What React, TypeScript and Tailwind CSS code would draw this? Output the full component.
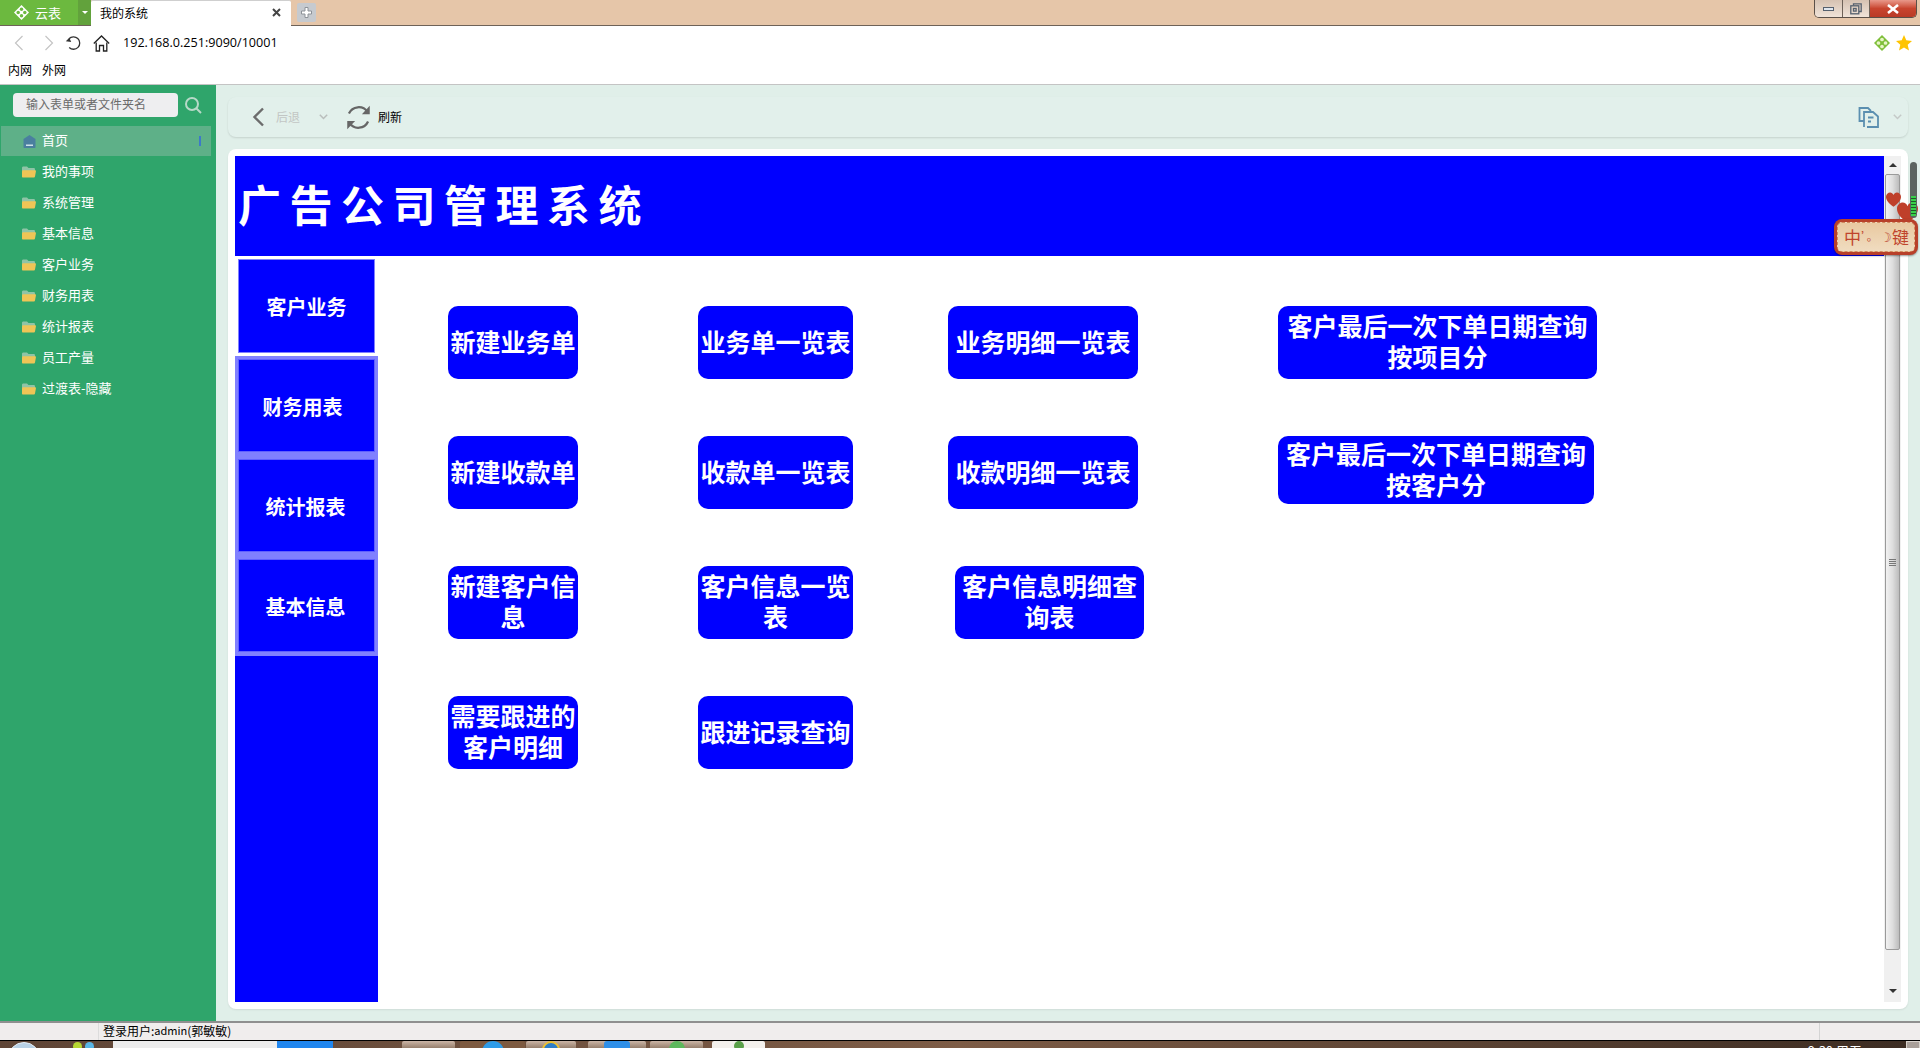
import React from 'react';

const FONT = "font-['Noto_Sans_CJK_SC',sans-serif]";

const menuItems = ['我的事项', '系统管理', '基本信息', '客户业务', '财务用表', '统计报表', '员工产量', '过渡表-隐藏'];

const sideTabs = [
    { label: '财务用表', cls: 'pr-2' },
    { label: '统计报表', cls: 'pr-0.5' },
    { label: '基本信息', cls: 'pr-0.5' },
];

// 按钮都是设计器里摆的，位置不太整齐
const buttons = [
    { lines: ['新建业务单'], col: 'col-start-1', cls: 'w-[130px] h-[73px]' },
    { lines: ['业务单一览表'], col: 'col-start-2', cls: 'w-[155px] h-[73px]' },
    { lines: ['业务明细一览表'], col: 'col-start-3', cls: 'w-[190px] h-[73px]' },
    { lines: ['客户最后一次下单日期查询', '按项目分'], col: 'col-start-4', cls: 'w-[319px] h-[73px]' },
    { lines: ['新建收款单'], col: 'col-start-1', cls: 'w-[130px] h-[73px]' },
    { lines: ['收款单一览表'], col: 'col-start-2', cls: 'w-[155px] h-[73px]' },
    { lines: ['收款明细一览表'], col: 'col-start-3', cls: 'w-[190px] h-[73px]' },
    { lines: ['客户最后一次下单日期查询', '按客户分'], col: 'col-start-4', cls: 'w-[316px] h-[68px]' },
    { lines: ['新建客户信', '息'], col: 'col-start-1', cls: 'w-[130px] h-[73px]' },
    { lines: ['客户信息一览', '表'], col: 'col-start-2', cls: 'w-[155px] h-[73px]' },
    { lines: ['客户信息明细查', '询表'], col: 'col-start-3', cls: 'w-[189px] h-[73px] ml-[7px]' },
    { lines: ['需要跟进的', '客户明细'], col: 'col-start-1', cls: 'w-[130px] h-[73px]' },
    { lines: ['跟进记录查询'], col: 'col-start-2', cls: 'w-[155px] h-[73px]' },
];

const Clover: React.FC<{ size: number; bg: string; hole: string }> = ({ size, bg, hole }) => (
    <svg width={size} height={size} viewBox="0 0 20 20">
        <path d="M10 0 20 10 10 20 0 10Z" fill={bg} />
        <circle cx="10" cy="5.6" r="2.3" fill={hole} />
        <circle cx="10" cy="14.4" r="2.3" fill={hole} />
        <circle cx="5.6" cy="10" r="2.3" fill={hole} />
        <circle cx="14.4" cy="10" r="2.3" fill={hole} />
    </svg>
);

const Folder = () => (
    <svg width="14" height="12" viewBox="0 0 14 12">
        <path d="M0 2C0 1 .6.5 1.400.5H5L6.500 2H11.500C12.400 2 13 2.500 13 3.400V5H0Z" fill="#8fc4a6" />
        <path d="M1.500 4.300H13C13.800 4.300 14 4.800 13.900 5.400L13 10.600C12.900 11.200 12.500 11.500 12 11.500H1C.4 11.500 0 11.100 0 10.500V5.500C0 4.800.7 4.300 1.500 4.300Z" fill="#efc556" />
    </svg>
);

const Heart: React.FC<{ className: string; size: number }> = ({ className, size }) => (
    <svg className={className} width={size} height={size} viewBox="0 0 14 14">
        <path d="M7 13.800C2.500 10.500 0 7.800 0 4.500 0 2 2 .4 3.800 .4 5.300 .4 6.400 1.300 7 2.800 7.600 1.300 8.700 .4 10.200 .4 12 .4 14 2 14 4.500 14 7.800 11.500 10.500 7 13.800Z" fill="#bf3f2a" />
    </svg>
);

const TitleBar = () => (
    <div className="h-[26px] flex bg-[#e6c6a9] border-b border-[#6e6258] relative shrink-0">
        <div className="w-[78px] h-[25px] bg-[#6cb93f] flex items-center pl-[14px] gap-[6px] text-white text-[13px]">
            <Clover size={15} bg="#ffffff" hole="#6cb93f" />
            <span>云表</span>
        </div>
        <div className="w-[13px] h-[25px] bg-[#62a23c] flex items-center justify-center">
            <div className="border-x-[3px] border-x-transparent border-t-[3px] border-t-white" />
        </div>
        <div className="w-[200px] h-[26px] bg-white rounded-t-[2px] border-t border-[#cfcfcf] flex items-center pl-[9px] pr-[10px] pb-[2px] justify-between text-[12px] text-black">
            <span>我的系统</span>
            <svg width="9" height="9" viewBox="0 0 9 9" fill="none" stroke="#444" strokeWidth="2">
                <path d="M1 1 8 8M8 1 1 8" />
            </svg>
        </div>
        <div className="w-[19px] h-[19px] mt-[3px] ml-[6px] bg-[#c6cacf] rounded-[2px] flex items-center justify-center">
            <svg width="11" height="11" viewBox="0 0 11 11">
                <path d="M4 .5H7V4H10.500V7H7V10.500H4V7H.5V4H4Z" fill="#fff" stroke="#8d9298" strokeWidth="1" />
            </svg>
        </div>
        <div className="ml-auto mr-[3px] w-[103px] h-[18px] flex rounded-b-[5px] border border-t-0 border-[#5b5048] overflow-hidden">
            <div className="w-[28px] bg-gradient-to-b from-[#d6c2b2] to-[#f0e3d8] border-r border-[#6e6258] flex items-center justify-center">
                <div className="w-[11px] h-[4px] bg-[#dfe6ee] border border-[#55606e]" />
            </div>
            <div className="w-[27px] bg-gradient-to-b from-[#d6c2b2] to-[#f0e3d8] border-r border-[#6e6258] flex items-center justify-center">
                <svg width="12" height="12" viewBox="0 0 12 12" fill="none" stroke="#55606e" strokeWidth="1.300">
                    <path d="M3.500 2.500V.8H11.200V8.500H9" />
                    <rect x=".8" y="2.800" width="8" height="8" />
                    <rect x="3.500" y="5.500" width="2.600" height="2.600" />
                </svg>
            </div>
            <div className="flex-1 bg-gradient-to-b from-[#e8988a] via-[#c8442e] to-[#b93a26] flex items-center justify-center">
                <svg width="14" height="10" viewBox="0 0 14 10" fill="none" stroke="#fff" strokeWidth="2.600">
                    <path d="M2 1 12 9M12 1 2 9" />
                </svg>
            </div>
        </div>
    </div>
);

const AddressBar = () => (
    <div className="h-[34px] bg-white flex items-center shrink-0 relative">
        <svg className="ml-[14px]" width="10" height="16" viewBox="0 0 10 16" fill="none" stroke="#c4c4c4" strokeWidth="1.200">
            <path d="M8.500 1 1.500 8 8.500 15" />
        </svg>
        <svg className="ml-[20px]" width="10" height="16" viewBox="0 0 10 16" fill="none" stroke="#c4c4c4" strokeWidth="1.200">
            <path d="M1.500 1 8.500 8 1.500 15" />
        </svg>
        <svg className="ml-[11px]" width="17" height="16" viewBox="0 0 17 16" fill="none" stroke="#333" strokeWidth="1.300">
            <path d="M4 3.800A6.200 6.200 0 1 1 4.200 12.500" />
            <path d="M.8 6.200 4.300 2.800 6.200 7Z" fill="#333" stroke="none" />
        </svg>
        <svg className="ml-[11px]" width="17" height="17" viewBox="0 0 17 17" fill="none" stroke="#222" strokeWidth="1.300">
            <path d="M.8 8.500 8.500 1 16.200 8.500" />
            <path d="M3.200 7.500V16H6.500V10.500H10.500V16H13.800V7.500" />
        </svg>
        <span className="ml-[13px] text-[12.600px] text-black font-['Open_Sans',sans-serif]">192.168.0.251:9090/10001</span>
        <div className="ml-auto mr-[8px] flex items-center gap-[6px]">
            <Clover size={16} bg="#7fbf3a" hole="#e8f5c8" />
            <svg width="16" height="16" viewBox="0 0 16 16">
                <path d="M8 0 10.300 5.300 16 5.900 11.700 9.700 13 15.500 8 12.500 3 15.500 4.300 9.700 0 5.900 5.700 5.300Z" fill="#ffc400" />
            </svg>
        </div>
    </div>
);

const Sidebar = () => (
    <div className="w-[216px] shrink-0 bg-[#2fa56b] text-white text-[13px]">
        <div className="pt-2 pl-[13px] flex items-center">
            <div className="w-[165px] h-6 bg-[#eeeef0] rounded-[4px] pl-[13px] pb-[2px] flex items-center text-[#6b6b6b] text-[12px]">
                输入表单或者文件夹名
            </div>
            <svg className="ml-[6px]" width="18" height="18" viewBox="0 0 18 18" fill="none" stroke="#b7d9c8" strokeWidth="2">
                <circle cx="8" cy="8" r="6" />
                <path d="M12.500 12.500 17 17" />
            </svg>
        </div>
        <div className="mt-[9px] ml-px w-[210px] h-[30px] bg-[#5eb088] flex items-center pl-[22px] relative">
            <svg width="13" height="13" viewBox="0 0 13 13">
                <path d="M6.500 0 12.500 4V12C12.500 12.600 12 13 11.500 13H1.500C1 13 .5 12.600 .5 12V4Z" fill="#4a7f9f" />
                <rect x="3" y="9.500" width="7" height="1.500" fill="#cfe3ea" />
            </svg>
            <span className="ml-[6px] pb-[2px]">首页</span>
            <div className="absolute right-[10px] top-[10px] w-[2px] h-[10px] bg-[#3d79c9]" />
        </div>
        {menuItems.map(item => (
            <div key={item} className="h-[31px] flex items-center pl-[22px] first:mt-[1px]">
                <Folder />
                <span className="ml-[6px] pb-[2px]">{item}</span>
            </div>
        ))}
    </div>
);

const Toolbar = () => (
    <div className="h-10 bg-[#e2f0eb] rounded-lg shadow-[0_1px_2px_rgba(0,0,0,0.12)] flex items-center text-[12px]">
        <svg className="ml-[24px]" width="13" height="20" viewBox="0 0 13 20" fill="none" stroke="#6c6c6c" strokeWidth="2.400">
            <path d="M11 1.500 2.500 10 11 18.500" />
        </svg>
        <span className="ml-[11px] text-[#c2c6c4]">后退</span>
        <svg className="ml-[19px]" width="9" height="6" viewBox="0 0 9 6" fill="none" stroke="#b9bebc" strokeWidth="1.500">
            <path d="M.8.8 4.500 4.500 8.200.8" />
        </svg>
        <svg className="ml-[17px]" width="27" height="27" viewBox="0 0 24 24" fill="none" stroke="#666" strokeWidth="2">
            <path d="M3.500 8.500A9.500 9.500 0 0 1 20 7" />
            <path d="M20.500 15.500A9.500 9.500 0 0 1 4 17" />
            <path d="M22 1.500V9H15Z" fill="#666" stroke="none" />
            <path d="M2 22.500V15H9Z" fill="#666" stroke="none" />
        </svg>
        <span className="ml-[6px] text-black">刷新</span>
        <svg className="ml-auto" width="21" height="21" viewBox="0 0 21 21" fill="none" stroke="#5b8fb0" strokeWidth="1.800">
            <path d="M6 14H1.500V1H10L13 4" />
            <path d="M6 20V5H15L20 9.500V20H9" />
            <path d="M10 10.500H15.500M10 14.500H13" />
        </svg>
        <svg className="ml-[14px] mr-[6px]" width="9" height="6" viewBox="0 0 9 6" fill="none" stroke="#c4c9c7" strokeWidth="1.500">
            <path d="M.8.8 4.500 4.500 8.200.8" />
        </svg>
    </div>
);

const ScrollBar = () => (
    <div className="w-[17px] shrink-0 bg-[#f0f0f0] flex flex-col items-center relative">
        <div className="h-[18px] flex items-center justify-center">
            <div className="border-x-[4px] border-x-transparent border-b-[4px] border-b-[#333]" />
        </div>
        <div className="w-[15px] h-[776px] rounded-[2px] border border-[#9a9a9a] bg-gradient-to-r from-[#f2f2f2] via-[#dedede] to-[#bcbcbc] flex flex-col items-center justify-center gap-px">
            <div className="w-[7px] h-px bg-[#777]" />
            <div className="w-[7px] h-px bg-[#777]" />
            <div className="w-[7px] h-px bg-[#777]" />
            <div className="w-[7px] h-px bg-[#777]" />
        </div>
        <div className="mt-auto h-[22px] flex items-center justify-center">
            <div className="border-x-[4px] border-x-transparent border-t-[4px] border-t-[#333]" />
        </div>
    </div>
);

const Card = () => (
    <div className="mt-3 h-[860px] bg-white rounded-lg p-[7px] flex shadow-[0_1px_2px_rgba(0,0,0,0.08)]">
        <div className="flex-1 flex flex-col min-w-0">
            <div className="h-[100px] bg-[#0000ff] shrink-0 flex items-center pl-[3px] pb-[6px]">
                <h1 className="text-[43px] leading-none font-bold text-white tracking-[8.500px]">广告公司管理系统</h1>
            </div>
            <div className="flex-1 flex min-h-0">
                <div className="w-[143px] bg-[#0000ff] shrink-0 text-[20px] font-bold text-white">
                    <div className="h-[100px] bg-white p-[3px]">
                        <div className="h-[94px] bg-[#0000ff] border border-[#8080ff] pt-[2px] flex items-center justify-center">客户业务</div>
                    </div>
                    {sideTabs.map(tab => (
                        <div key={tab.label} className="h-[100px] bg-[#8080ff] p-[3px]">
                            <div className={`h-[93px] bg-[#0000ff] border border-[#6060ff] pt-[2px] flex items-center justify-center ${tab.cls}`}>{tab.label}</div>
                        </div>
                    ))}
                </div>
                <div className="flex-1 pt-[50px] pl-[70px] grid grid-cols-[250px_250px_330px_1fr] auto-rows-[130px] content-start">
                    {buttons.map(btn => (
                        <div
                            key={btn.lines[0]}
                            className={`${btn.col} ${btn.cls} bg-[#0000ff] rounded-[10px] pb-[3px] flex flex-col items-center justify-center text-white text-[25px] leading-[31px] font-bold whitespace-nowrap`}
                        >
                            {btn.lines.map(line => <span key={line}>{line}</span>)}
                        </div>
                    ))}
                </div>
            </div>
        </div>
        <ScrollBar />
    </div>
);

// 任务栏只露出顶上几个像素
const Taskbar = () => (
    <div className="h-2 flex-1 relative overflow-hidden bg-gradient-to-r from-[#5f4536] via-[#7d5c46] to-[#3c2c22] flex items-start">
        <div className="w-8 h-8 ml-2 mt-[1px] rounded-full bg-[#b9d2e6] border border-[#e6eef5] shrink-0" />
        <div className="w-[9px] h-[9px] ml-[33px] mt-[1px] rounded-full bg-[#b7d833] shrink-0" />
        <div className="w-[9px] h-[9px] ml-[3px] mt-[1px] rounded-full bg-[#59b6e6] shrink-0" />
        <div className="w-[164px] h-2 ml-[19px] bg-[#ececec] shrink-0" />
        <div className="w-[56px] h-2 bg-[#1f86ef] shrink-0" />
        <div className="w-[53px] h-2 ml-[69px] bg-gradient-to-b from-[#cbb5a6] to-[#8f7865] rounded-t-[2px] shrink-0" />
        <div className="w-[65px] h-2 ml-[5px] bg-[#7d5a40] rounded-t-[2px] flex justify-center shrink-0">
            <div className="w-[22px] h-[22px] rounded-full bg-[#2e9ce8]" />
        </div>
        <div className="w-[50px] h-2 ml-px bg-gradient-to-b from-[#cbb5a6] to-[#8f7865] rounded-t-[2px] flex justify-center shrink-0">
            <div className="w-[18px] h-[18px] rounded-full border-2 border-[#eec030] bg-[#2e7fc8]" />
        </div>
        <div className="w-[58px] h-2 ml-[12px] bg-gradient-to-b from-[#cbb5a6] to-[#8f7865] rounded-t-[2px] flex justify-center shrink-0">
            <div className="w-[26px] h-[20px] rounded-[3px] bg-[#2e8fe8]" />
        </div>
        <div className="w-[53px] h-2 ml-[4px] bg-gradient-to-b from-[#cbb5a6] to-[#8f7865] rounded-t-[2px] flex justify-center shrink-0">
            <div className="w-[16px] h-[16px] rounded-full bg-[#5cb85c]" />
        </div>
        <div className="w-[53px] h-2 ml-[9px] bg-[#f3f0ec] rounded-t-[2px] flex justify-center shrink-0">
            <div className="w-[10px] h-[10px] rounded-full bg-[#5aa04a]" />
        </div>
        <span className="ml-auto mr-[58px] mt-[3px] text-[13px] leading-none text-white">9:30 周五</span>
        <div className="absolute right-0 top-0 w-[14px] h-2 bg-[#a9a09a] border border-[#d8d2cc]" />
    </div>
);

const App: React.FC = () => {
    return (
        <div className={`${FONT} w-[1920px] h-[1048px] overflow-hidden flex flex-col relative bg-white`}>
            <TitleBar />
            <AddressBar />
            <div className="h-[25px] bg-white border-b border-[#c4c4c4] flex items-center pl-2 pb-[5px] gap-[10px] text-[12px] text-black shrink-0">
                <span>内网</span>
                <span>外网</span>
            </div>
            <div className="h-[936px] flex shrink-0">
                <Sidebar />
                <div className="flex-1 bg-[#e0efe9] pt-3 pl-3 pr-3 min-w-0">
                    <Toolbar />
                    <Card />
                </div>
            </div>
            <div className="h-[20px] bg-[#f0eded] border-t-2 border-[#8f8f8f] border-b border-b-black flex text-[12px] text-black leading-none shrink-0">
                <div className="w-[99px] border-r border-[#dcdcdc]" />
                <div className="pl-[4px] pb-[2px] flex items-center">登录用户:<span className="text-[11px]">admin</span>(郭敏敏)</div>
                <div className="ml-auto w-[101px] border-l border-[#d4d4d4]" />
            </div>
            <Taskbar />

            {/* 输入法状态条和音量条，浮在页面上面 */}
            <Heart className="absolute left-[1886px] top-[192px]" size={15} />
            <Heart className="absolute left-[1897px] top-[202px]" size={21} />
            <div className="absolute left-[1910px] top-[162px] w-[7px] h-[56px] rounded-[4px] bg-[#5c6460] flex flex-col justify-end pb-[2px] px-px">
                <div className="h-[20px] bg-[repeating-linear-gradient(to_bottom,#38d04a_0,#38d04a_2px,#1f5a2a_2px,#1f5a2a_3px)]" />
            </div>
            <div className="absolute left-[1834px] top-[219px] w-[84px] h-[36px] rounded-[8px] bg-[#b8402a] p-[3px] shadow-[0_1px_2px_rgba(0,0,0,0.4)]">
                <div className="h-full rounded-[5px] bg-gradient-to-b from-[#e9c9a0] to-[#f0dcc0] border border-dashed border-[#d08a60] flex items-center justify-between pl-[6px] pr-[5px] pb-[2px] text-[#c0442c] text-[17px] leading-none">
                    <span>中</span>
                    <span className="text-[11px] flex items-center gap-[2px]">’。<span className="text-[#b8402a] text-[13px]">☽</span></span>
                    <span>键</span>
                </div>
            </div>
        </div>
    );
};

export default App;
